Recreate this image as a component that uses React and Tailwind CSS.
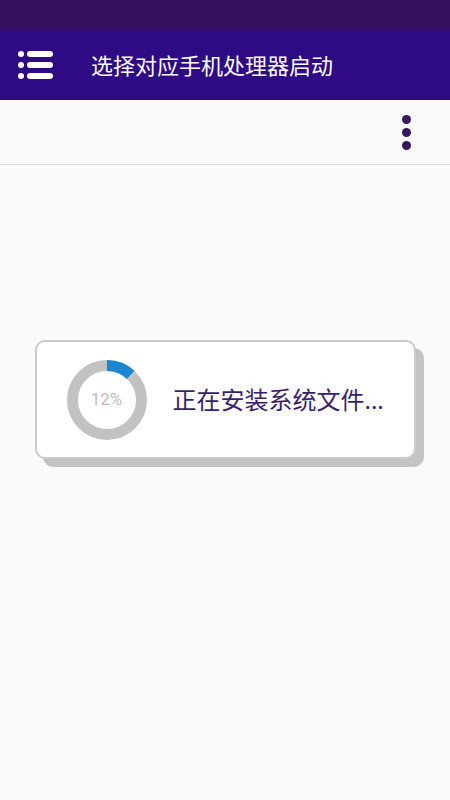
import React from "react";

const Ring = ({ percent }) => {
  const r = 34.5;
  const c = 2 * Math.PI * r;
  return (
    <div className="relative w-[80px] h-[80px] shrink-0">
      <svg width="80" height="80" viewBox="0 0 80 80">
        <circle cx="40" cy="40" r={r} fill="none" stroke="#c2c2c2" strokeWidth="11" />
        <circle
          cx="40"
          cy="40"
          r={r}
          fill="none"
          stroke="#1a86d0"
          strokeWidth="11"
          strokeDasharray={`${(c * percent) / 100} ${c}`}
          transform="rotate(-90 40 40)"
        />
      </svg>
      <div
        className="absolute inset-0 flex items-center justify-center text-[17px] text-[#bdbdbd]"
        style={{ fontFamily: "Roboto, sans-serif" }}
      >
        {percent}%
      </div>
    </div>
  );
};

const App = () => {
  return (
    <div
      className="w-[450px] h-[800px] bg-[#fafafa] flex flex-col"
      style={{ fontFamily: '"Noto Sans", "Noto Sans CJK SC", sans-serif' }}
    >
      <div className="h-[30px] bg-[#361160]"></div>
      <div className="h-[70px] bg-[#2e0b84] flex items-center">
        <div className="ml-[18px] w-[35px] flex flex-col gap-[5px]">
          {[0, 1, 2].map((i) => (
            <div key={i} className="flex items-center gap-[3px]">
              <div className="w-[6px] h-[6px] rounded-full bg-white"></div>
              <div className="w-[26px] h-[6px] rounded-full bg-white"></div>
            </div>
          ))}
        </div>
        <div className="ml-[38px] text-white text-[22px] leading-none">选择对应手机处理器启动</div>
      </div>
      <div className="h-[65px] border-b border-[#dcdcdc] flex items-center justify-end pr-[39px]">
        <div className="flex flex-col gap-[4px]">
          <div className="w-[9px] h-[9px] rounded-full bg-[#35175f]"></div>
          <div className="w-[9px] h-[9px] rounded-full bg-[#35175f]"></div>
          <div className="w-[9px] h-[9px] rounded-full bg-[#35175f]"></div>
        </div>
      </div>
      <div className="flex-1 flex items-start justify-center pt-[175px]">
        <div className="w-[381px] h-[119px] bg-white rounded-[10px] border-2 border-[#cbcbcb] shadow-[8px_8px_0_#c4c4c4] flex items-center px-[30px] gap-[26px]">
          <Ring percent={12} />
          <div className="text-[24px] text-[#3b1d6b] leading-none whitespace-nowrap">正在安装系统文件...</div>
        </div>
      </div>
    </div>
  );
};

export default App;
